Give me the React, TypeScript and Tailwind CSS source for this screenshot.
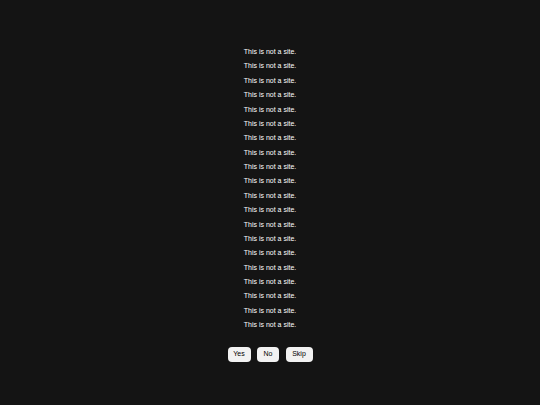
const lines = Array.from({ length: 20 }, (_, i) => i);

export default function App() {
  return (
    <div className="flex h-[405px] w-[540px] flex-col items-center bg-[#141414] pt-[45px] font-['Liberation_Sans',Arial,sans-serif] text-white">
      <div className="flex flex-col items-center">
        {lines.map((i) => (
          <p key={i} className="text-[7px] leading-[14.37px]">
            This is not a site.
          </p>
        ))}
      </div>
      <div className="mt-[14px] flex items-center gap-[6.5px]">
        <button className="h-[15px] w-[23px] rounded-[4px] bg-[#f2f2f2] text-[7px] text-black">Yes</button>
        <button className="h-[15px] w-[22px] rounded-[4px] bg-[#f2f2f2] text-[7px] text-black">No</button>
        <button className="h-[15px] w-[27px] rounded-[4px] bg-[#f2f2f2] text-[7px] text-black">Skip</button>
      </div>
    </div>
  );
}
